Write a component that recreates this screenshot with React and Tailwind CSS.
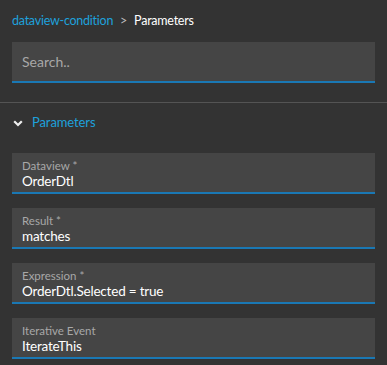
import React from "react";

const fields = [
  { label: "Dataview *", value: "OrderDtl" },
  { label: "Result *", value: "matches" },
  { label: "Expression *", value: "OrderDtl.Selected = true" },
  { label: "Iterative Event", value: "IterateThis" },
];

export default function App() {
  return (
    <div
      className="w-[387px] h-[365px] bg-[#333333] overflow-hidden"
      style={{ fontFamily: 'Lato, "Noto Sans", sans-serif' }}
    >
      <div className="h-[42px] flex items-center pl-3 text-[12.5px] tracking-[-0.25px]">
        <span className="text-[#1ea1dc]">dataview-condition</span>
        <span className="text-[#bbbbbb] mx-[7px]">&gt;</span>
        <span className="text-white">Parameters</span>
      </div>
      <div className="px-3">
        <div className="h-[41px] bg-[#454545] border-b-2 border-[#1a78b4] flex items-center px-[10px] text-[14px] text-[#a8a8a8]">
          Search..
        </div>
      </div>
      <div className="h-[19px]" />
      <div className="h-px bg-[#545454]" />
      <div className="h-[40px] flex items-center pl-[13px] text-[13px] tracking-[-0.1px]">
        <svg width="10" height="7" viewBox="0 0 10 7" className="mr-[9px]">
          <path d="M1.2 1.2 L5 5 L8.8 1.2" fill="none" stroke="#eeeeee" strokeWidth="2.2" />
        </svg>
        <span className="text-[#1ea1dc]">Parameters</span>
      </div>
      <div className="px-3 pt-[10px] flex flex-col gap-[14px]">
        {fields.map((f) => (
          <div
            key={f.label}
            className="h-[41px] bg-[#454545] border-b-2 border-[#1a78b4] flex flex-col px-[10px] pt-[6px]"
          >
            <div className="text-[11.5px] leading-[14px] text-[#a8a8a8]">{f.label}</div>
            <div className="text-[13.5px] leading-[17px] tracking-[-0.2px] text-white">{f.value}</div>
          </div>
        ))}
      </div>
    </div>
  );
}
